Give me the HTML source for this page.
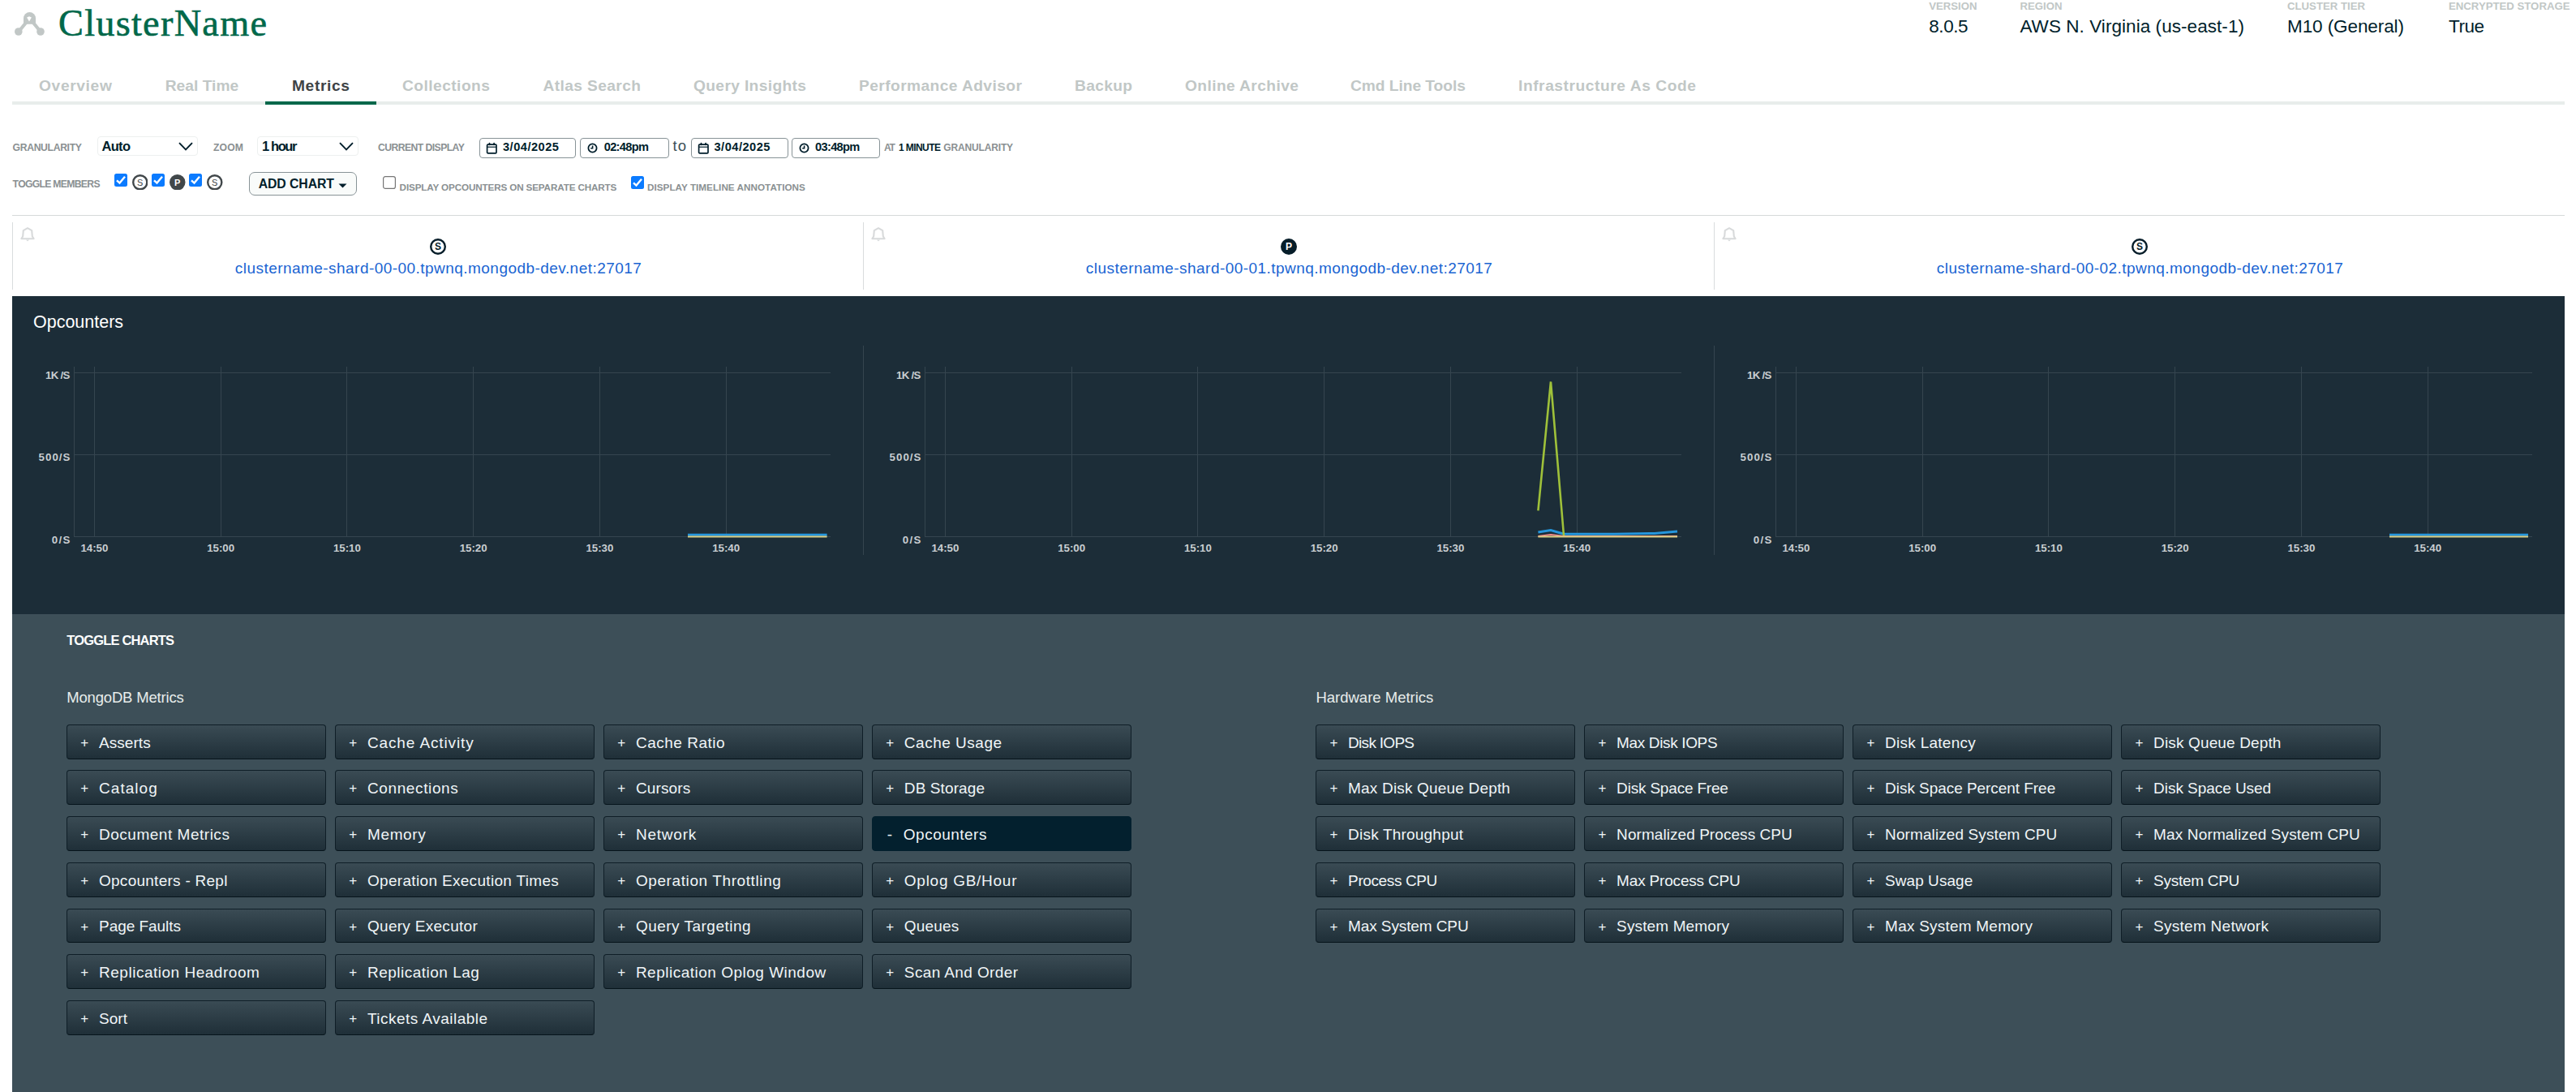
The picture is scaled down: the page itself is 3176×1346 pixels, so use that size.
<!DOCTYPE html>
<html><head><meta charset="utf-8"><style>
html,body{margin:0;padding:0;background:#fff;width:3176px;height:1346px;overflow:hidden;position:relative}
.t{position:absolute;white-space:nowrap;font-family:"Liberation Sans", sans-serif}
.b{position:absolute}
</style></head><body>
<svg class="b" style="left:16px;top:13px" width="42" height="34" viewBox="16 13 42 34">
<g fill="#c1c7c6" stroke="none">
<path d="M29 22.5 A7.5 7.5 0 0 1 44 22.5 L44 29.7 L29 29.7 Z"/>
<circle cx="22.8" cy="39" r="4.8"/><circle cx="50" cy="39" r="4.8"/>
</g>
<g stroke="#c1c7c6" stroke-width="4.2" fill="none" stroke-linecap="round">
<line x1="32" y1="28" x2="23" y2="39"/><line x1="41" y1="28" x2="50" y2="39"/>
</g>
<path d="M36 20.2 L38.9 21.6 L36 26.4 L33.1 21.6 Z" fill="#fff"/>
</svg>
<div class="t" style="left:72.00px;top:5.53px;font-size:46.3px;line-height:46.3px;color:#00684a;font-weight:400;font-family:'Liberation Serif', serif;letter-spacing:1.270px;-webkit-text-stroke:0.6px #00684a;">ClusterName</div>
<div class="t" style="left:2378.20px;top:0.62px;font-size:13.2px;line-height:13.2px;color:#c1c7c6;font-weight:700;">VERSION</div>
<div class="t" style="left:2378.20px;top:22.15px;font-size:22.5px;line-height:22.5px;color:#001e2b;font-weight:400;letter-spacing:-0.400px;">8.0.5</div>
<div class="t" style="left:2490.40px;top:0.62px;font-size:13.2px;line-height:13.2px;color:#c1c7c6;font-weight:700;">REGION</div>
<div class="t" style="left:2490.40px;top:22.15px;font-size:22.5px;line-height:22.5px;color:#001e2b;font-weight:400;letter-spacing:0.058px;">AWS N. Virginia (us-east-1)</div>
<div class="t" style="left:2820.00px;top:0.62px;font-size:13.2px;line-height:13.2px;color:#c1c7c6;font-weight:700;">CLUSTER TIER</div>
<div class="t" style="left:2820.00px;top:22.15px;font-size:22.5px;line-height:22.5px;color:#001e2b;font-weight:400;letter-spacing:-0.092px;">M10 (General)</div>
<div class="t" style="left:3019.00px;top:0.62px;font-size:13.2px;line-height:13.2px;color:#c1c7c6;font-weight:700;">ENCRYPTED STORAGE</div>
<div class="t" style="left:3019.00px;top:22.15px;font-size:22.5px;line-height:22.5px;color:#001e2b;font-weight:400;letter-spacing:-0.467px;">True</div>
<div class="b" style="left:15.00px;top:125.00px;width:3147.00px;height:3.70px;background:#e8edeb"></div>
<div class="t" style="left:48.00px;top:95.94px;font-size:19.2px;line-height:19.2px;color:#c1c7c6;font-weight:700;letter-spacing:0.643px;">Overview</div>
<div class="t" style="left:203.70px;top:95.94px;font-size:19.2px;line-height:19.2px;color:#c1c7c6;font-weight:700;letter-spacing:0.025px;">Real Time</div>
<div class="t" style="left:360.00px;top:95.94px;font-size:19.2px;line-height:19.2px;color:#3e4346;font-weight:700;letter-spacing:0.633px;">Metrics</div>
<div class="t" style="left:496.00px;top:95.94px;font-size:19.2px;line-height:19.2px;color:#c1c7c6;font-weight:700;letter-spacing:0.450px;">Collections</div>
<div class="t" style="left:669.60px;top:95.94px;font-size:19.2px;line-height:19.2px;color:#c1c7c6;font-weight:700;letter-spacing:0.373px;">Atlas Search</div>
<div class="t" style="left:855.00px;top:95.94px;font-size:19.2px;line-height:19.2px;color:#c1c7c6;font-weight:700;letter-spacing:0.354px;">Query Insights</div>
<div class="t" style="left:1059.00px;top:95.94px;font-size:19.2px;line-height:19.2px;color:#c1c7c6;font-weight:700;letter-spacing:0.417px;">Performance Advisor</div>
<div class="t" style="left:1325.00px;top:95.94px;font-size:19.2px;line-height:19.2px;color:#c1c7c6;font-weight:700;letter-spacing:0.320px;">Backup</div>
<div class="t" style="left:1461.00px;top:95.94px;font-size:19.2px;line-height:19.2px;color:#c1c7c6;font-weight:700;letter-spacing:0.400px;">Online Archive</div>
<div class="t" style="left:1665.00px;top:95.94px;font-size:19.2px;line-height:19.2px;color:#c1c7c6;font-weight:700;letter-spacing:-0.046px;">Cmd Line Tools</div>
<div class="t" style="left:1872.00px;top:95.94px;font-size:19.2px;line-height:19.2px;color:#c1c7c6;font-weight:700;letter-spacing:0.557px;">Infrastructure As Code</div>
<div class="b" style="left:327.00px;top:125.00px;width:137.00px;height:4.00px;background:#00684a"></div>
<div class="t" style="left:15.60px;top:175.97px;font-size:12.2px;line-height:12.2px;color:#8a9092;font-weight:700;letter-spacing:-0.340px;">GRANULARITY</div>
<div class="b" style="left:120.00px;top:168.00px;width:124.00px;height:23.60px;border:1px solid #edf0ef;border-radius:4px;box-sizing:border-box;background:#fff"></div>
<div class="t" style="left:125.40px;top:172.33px;font-size:16.5px;line-height:16.5px;color:#001e2b;font-weight:700;letter-spacing:-0.667px;">Auto</div>
<svg class="b" style="left:219.5px;top:175px" width="18" height="11" viewBox="0 0 18 11"><path d="M1 1.2 L9 9.3 L17 1.2" stroke="#001e2b" stroke-width="1.9" fill="none"/></svg>
<div class="t" style="left:263.00px;top:175.97px;font-size:12.2px;line-height:12.2px;color:#8a9092;font-weight:700;letter-spacing:0.133px;">ZOOM</div>
<div class="b" style="left:317.00px;top:168.00px;width:125.00px;height:23.60px;border:1px solid #edf0ef;border-radius:4px;box-sizing:border-box;background:#fff"></div>
<div class="t" style="left:323.00px;top:172.33px;font-size:16.5px;line-height:16.5px;color:#001e2b;font-weight:700;letter-spacing:-1.400px;">1 hour</div>
<svg class="b" style="left:417.5px;top:175px" width="18" height="11" viewBox="0 0 18 11"><path d="M1 1.2 L9 9.3 L17 1.2" stroke="#001e2b" stroke-width="1.9" fill="none"/></svg>
<div class="t" style="left:466.00px;top:175.97px;font-size:12.2px;line-height:12.2px;color:#8a9092;font-weight:700;letter-spacing:-0.557px;">CURRENT DISPLAY</div>
<div class="b" style="left:591.40px;top:170.00px;width:119.00px;height:25.00px;border:1px solid #889397;border-radius:4px;box-sizing:border-box;background:#fff"></div>
<svg class="b" style="left:599.4px;top:174.5px" width="15" height="15" viewBox="0 0 15 15"><rect x="1.6" y="3.2" width="11.4" height="10.6" rx="1" fill="none" stroke="#001e2b" stroke-width="1.7"/><line x1="1.6" y1="6.2" x2="13" y2="6.2" stroke="#001e2b" stroke-width="1.2"/><rect x="3.6" y="0.8" width="1.8" height="3.4" rx="0.9" fill="#001e2b"/><rect x="9.2" y="0.8" width="1.8" height="3.4" rx="0.9" fill="#001e2b"/></svg>
<div class="t" style="left:620.00px;top:173.84px;font-size:14.6px;line-height:14.6px;color:#001e2b;font-weight:700;letter-spacing:0.500px;">3/04/2025</div>
<div class="b" style="left:715.00px;top:170.00px;width:109.60px;height:25.00px;border:1px solid #889397;border-radius:4px;box-sizing:border-box;background:#fff"></div>
<svg class="b" style="left:724px;top:176px" width="13" height="13" viewBox="0 0 13 13"><circle cx="6.5" cy="6.5" r="5.1" fill="none" stroke="#001e2b" stroke-width="1.8"/><path d="M6.6 3.4 V6.8 H4.2" stroke="#001e2b" stroke-width="1.6" fill="none"/></svg>
<div class="t" style="left:744.70px;top:173.84px;font-size:14.6px;line-height:14.6px;color:#001e2b;font-weight:700;letter-spacing:-0.650px;">02:48pm</div>
<div class="t" style="left:829.50px;top:170.84px;font-size:18.5px;line-height:18.5px;color:#3d4f58;font-weight:400;letter-spacing:1.100px;">to</div>
<div class="b" style="left:852.00px;top:170.00px;width:119.60px;height:25.00px;border:1px solid #889397;border-radius:4px;box-sizing:border-box;background:#fff"></div>
<svg class="b" style="left:860px;top:174.5px" width="15" height="15" viewBox="0 0 15 15"><rect x="1.6" y="3.2" width="11.4" height="10.6" rx="1" fill="none" stroke="#001e2b" stroke-width="1.7"/><line x1="1.6" y1="6.2" x2="13" y2="6.2" stroke="#001e2b" stroke-width="1.2"/><rect x="3.6" y="0.8" width="1.8" height="3.4" rx="0.9" fill="#001e2b"/><rect x="9.2" y="0.8" width="1.8" height="3.4" rx="0.9" fill="#001e2b"/></svg>
<div class="t" style="left:880.50px;top:173.84px;font-size:14.6px;line-height:14.6px;color:#001e2b;font-weight:700;letter-spacing:0.500px;">3/04/2025</div>
<div class="b" style="left:976.00px;top:170.00px;width:108.60px;height:25.00px;border:1px solid #889397;border-radius:4px;box-sizing:border-box;background:#fff"></div>
<svg class="b" style="left:985px;top:176px" width="13" height="13" viewBox="0 0 13 13"><circle cx="6.5" cy="6.5" r="5.1" fill="none" stroke="#001e2b" stroke-width="1.8"/><path d="M6.6 3.4 V6.8 H4.2" stroke="#001e2b" stroke-width="1.6" fill="none"/></svg>
<div class="t" style="left:1005.00px;top:173.84px;font-size:14.6px;line-height:14.6px;color:#001e2b;font-weight:700;letter-spacing:-0.650px;">03:48pm</div>
<div class="t" style="left:1090.10px;top:175.64px;font-size:12px;line-height:12px;color:#8a9092;font-weight:700;letter-spacing:-1.400px;">AT</div>
<div class="t" style="left:1108.00px;top:175.64px;font-size:12px;line-height:12px;color:#001e2b;font-weight:700;letter-spacing:-0.586px;">1 MINUTE</div>
<div class="t" style="left:1163.30px;top:175.64px;font-size:12px;line-height:12px;color:#8a9092;font-weight:700;letter-spacing:-0.150px;">GRANULARITY</div>
<div class="t" style="left:15.60px;top:220.67px;font-size:12.2px;line-height:12.2px;color:#8a9092;font-weight:700;letter-spacing:-0.692px;">TOGGLE MEMBERS</div>
<svg class="b" style="left:141.1px;top:214px" width="16" height="16" viewBox="0 0 16 16"><rect width="16" height="16" rx="2.5" fill="#0b7bff"/><path d="M3 8.3 L6.5 11.6 L13 3.8" stroke="#fff" stroke-width="2.4" fill="none"/></svg>
<svg class="b" style="left:162.8px;top:214.9px" width="19.5" height="19.5" viewBox="0 0 19.5 19.5"><circle cx="9.75" cy="9.75" r="8.55" fill="#fff" stroke="#41474a" stroke-width="2.4"/><text x="9.75" y="13.71" text-anchor="middle" font-family="Liberation Sans" font-weight="400" font-size="11" fill="#41474a">S</text></svg>
<svg class="b" style="left:187.1px;top:214px" width="16" height="16" viewBox="0 0 16 16"><rect width="16" height="16" rx="2.5" fill="#0b7bff"/><path d="M3 8.3 L6.5 11.6 L13 3.8" stroke="#fff" stroke-width="2.4" fill="none"/></svg>
<svg class="b" style="left:209px;top:214.9px" width="19.5" height="19.5" viewBox="0 0 19.5 19.5"><circle cx="9.75" cy="9.75" r="9.75" fill="#41474a"/><text x="9.75" y="13.71" text-anchor="middle" font-family="Liberation Sans" font-weight="700" font-size="11" fill="#fff">P</text></svg>
<svg class="b" style="left:233.1px;top:214px" width="16" height="16" viewBox="0 0 16 16"><rect width="16" height="16" rx="2.5" fill="#0b7bff"/><path d="M3 8.3 L6.5 11.6 L13 3.8" stroke="#fff" stroke-width="2.4" fill="none"/></svg>
<svg class="b" style="left:255px;top:214.9px" width="19.5" height="19.5" viewBox="0 0 19.5 19.5"><circle cx="9.75" cy="9.75" r="8.55" fill="#fff" stroke="#41474a" stroke-width="2.4"/><text x="9.75" y="13.71" text-anchor="middle" font-family="Liberation Sans" font-weight="400" font-size="11" fill="#41474a">S</text></svg>
<div class="b" style="left:307.00px;top:212.00px;width:132.60px;height:28.70px;border:1px solid #889397;border-radius:7px;box-sizing:border-box;background:#f9fbfa"></div>
<div class="t" style="left:318.70px;top:218.62px;font-size:15.8px;line-height:15.8px;color:#001e2b;font-weight:700;letter-spacing:-0.075px;">ADD CHART</div>
<svg class="b" style="left:417px;top:226px" width="11" height="6" viewBox="0 0 11 6"><path d="M0.5 0.5 H10.5 L5.5 5.5 Z" fill="#001e2b"/></svg>
<svg class="b" style="left:472px;top:217px" width="16" height="16" viewBox="0 0 16 16"><rect x="0.6" y="0.6" width="14.8" height="14.8" rx="2.5" fill="#fff" stroke="#767676" stroke-width="1.2"/></svg>
<div class="t" style="left:492.60px;top:225.09px;font-size:11.7px;line-height:11.7px;color:#8a9092;font-weight:700;letter-spacing:-0.144px;">DISPLAY OPCOUNTERS ON SEPARATE CHARTS</div>
<svg class="b" style="left:778px;top:217px" width="16" height="16" viewBox="0 0 16 16"><rect width="16" height="16" rx="2.5" fill="#0b7bff"/><path d="M3 8.3 L6.5 11.6 L13 3.8" stroke="#fff" stroke-width="2.4" fill="none"/></svg>
<div class="t" style="left:798.00px;top:225.09px;font-size:11.7px;line-height:11.7px;color:#8a9092;font-weight:700;letter-spacing:0.033px;">DISPLAY TIMELINE ANNOTATIONS</div>
<div class="b" style="left:15.00px;top:265.00px;width:3147.00px;height:1.00px;background:#d6d9da"></div>
<div class="b" style="left:15.00px;top:274.00px;width:1.00px;height:83.00px;background:#d9dcdd"></div>
<svg class="b" style="left:25px;top:279px" width="18" height="19" viewBox="0 0 18 19"><path d="M9 2.2 L14.2 5.2 L14.8 12.2 L16.6 15.2 H1.4 L3.2 12.2 L3.8 5.2 Z" fill="none" stroke="#d8dadb" stroke-width="2.1" stroke-linejoin="round"/><path d="M6.9 16.4 L9 18.6 L11.1 16.4 Z" fill="#d8dadb"/></svg>
<svg class="b" style="left:529.5px;top:293.6px" width="20" height="20" viewBox="0 0 20 20"><circle cx="10" cy="10" r="8.8" fill="#fff" stroke="#061d29" stroke-width="2.4"/><text x="10" y="14.3" text-anchor="middle" font-family="Liberation Sans" font-weight="700" font-size="12" fill="#061d29">S</text></svg>
<div class="t" style="left:289.80px;top:320.71px;font-size:19px;line-height:19px;color:#1964d2;font-weight:400;letter-spacing:0.458px;">clustername-shard-00-00.tpwnq.mongodb-dev.net:27017</div>
<div class="b" style="left:1064.00px;top:274.00px;width:1.00px;height:83.00px;background:#d9dcdd"></div>
<svg class="b" style="left:1074px;top:279px" width="18" height="19" viewBox="0 0 18 19"><path d="M9 2.2 L14.2 5.2 L14.8 12.2 L16.6 15.2 H1.4 L3.2 12.2 L3.8 5.2 Z" fill="none" stroke="#d8dadb" stroke-width="2.1" stroke-linejoin="round"/><path d="M6.9 16.4 L9 18.6 L11.1 16.4 Z" fill="#d8dadb"/></svg>
<svg class="b" style="left:1578.5px;top:293.6px" width="20" height="20" viewBox="0 0 20 20"><circle cx="10" cy="10" r="10" fill="#061d29"/><text x="10" y="14.4" text-anchor="middle" font-family="Liberation Sans" font-weight="700" font-size="12" fill="#fff">P</text></svg>
<div class="t" style="left:1338.80px;top:320.71px;font-size:19px;line-height:19px;color:#1964d2;font-weight:400;letter-spacing:0.458px;">clustername-shard-00-01.tpwnq.mongodb-dev.net:27017</div>
<div class="b" style="left:2113.00px;top:274.00px;width:1.00px;height:83.00px;background:#d9dcdd"></div>
<svg class="b" style="left:2123px;top:279px" width="18" height="19" viewBox="0 0 18 19"><path d="M9 2.2 L14.2 5.2 L14.8 12.2 L16.6 15.2 H1.4 L3.2 12.2 L3.8 5.2 Z" fill="none" stroke="#d8dadb" stroke-width="2.1" stroke-linejoin="round"/><path d="M6.9 16.4 L9 18.6 L11.1 16.4 Z" fill="#d8dadb"/></svg>
<svg class="b" style="left:2627.5px;top:293.6px" width="20" height="20" viewBox="0 0 20 20"><circle cx="10" cy="10" r="8.8" fill="#fff" stroke="#061d29" stroke-width="2.4"/><text x="10" y="14.3" text-anchor="middle" font-family="Liberation Sans" font-weight="700" font-size="12" fill="#061d29">S</text></svg>
<div class="t" style="left:2387.80px;top:320.71px;font-size:19px;line-height:19px;color:#1964d2;font-weight:400;letter-spacing:0.458px;">clustername-shard-00-02.tpwnq.mongodb-dev.net:27017</div>
<div class="b" style="left:15.00px;top:365.00px;width:3147.00px;height:392.00px;background:#1c2d38"></div>
<div class="t" style="left:41.00px;top:386.80px;font-size:21.5px;line-height:21.5px;color:#ffffff;font-weight:400;letter-spacing:-0.011px;">Opcounters</div>
<div class="b" style="left:91.50px;top:459.10px;width:932.50px;height:1.00px;background:#35454f"></div>
<div class="b" style="left:91.50px;top:559.50px;width:932.50px;height:1.00px;background:#35454f"></div>
<div class="b" style="left:91.50px;top:660.90px;width:932.50px;height:1.00px;background:#35454f"></div>
<div class="b" style="left:91.00px;top:452.00px;width:1.00px;height:210.00px;background:#35454f"></div>
<div class="b" style="left:115.90px;top:452.00px;width:1.00px;height:210.00px;background:#35454f"></div>
<div class="t" style="left:99.40px;top:669.44px;font-size:13.3px;line-height:13.3px;color:#c9ced1;font-weight:700;">14:50</div>
<div class="b" style="left:271.65px;top:452.00px;width:1.00px;height:210.00px;background:#35454f"></div>
<div class="t" style="left:255.15px;top:669.44px;font-size:13.3px;line-height:13.3px;color:#c9ced1;font-weight:700;">15:00</div>
<div class="b" style="left:427.40px;top:452.00px;width:1.00px;height:210.00px;background:#35454f"></div>
<div class="t" style="left:410.90px;top:669.44px;font-size:13.3px;line-height:13.3px;color:#c9ced1;font-weight:700;">15:10</div>
<div class="b" style="left:583.15px;top:452.00px;width:1.00px;height:210.00px;background:#35454f"></div>
<div class="t" style="left:566.65px;top:669.44px;font-size:13.3px;line-height:13.3px;color:#c9ced1;font-weight:700;">15:20</div>
<div class="b" style="left:738.90px;top:452.00px;width:1.00px;height:210.00px;background:#35454f"></div>
<div class="t" style="left:722.40px;top:669.44px;font-size:13.3px;line-height:13.3px;color:#c9ced1;font-weight:700;">15:30</div>
<div class="b" style="left:894.65px;top:452.00px;width:1.00px;height:210.00px;background:#35454f"></div>
<div class="t" style="left:878.15px;top:669.44px;font-size:13.3px;line-height:13.3px;color:#c9ced1;font-weight:700;">15:40</div>
<div class="t" style="left:56.00px;top:456.14px;font-size:13.3px;line-height:13.3px;color:#c9ced1;font-weight:700;letter-spacing:-0.700px;">1K /S</div>
<div class="t" style="left:47.60px;top:556.74px;font-size:13.3px;line-height:13.3px;color:#c9ced1;font-weight:700;letter-spacing:1.025px;">500/S</div>
<div class="t" style="left:63.80px;top:658.54px;font-size:13.3px;line-height:13.3px;color:#c9ced1;font-weight:700;letter-spacing:1.350px;">0/S</div>
<div class="b" style="left:1140.50px;top:459.10px;width:932.50px;height:1.00px;background:#35454f"></div>
<div class="b" style="left:1140.50px;top:559.50px;width:932.50px;height:1.00px;background:#35454f"></div>
<div class="b" style="left:1140.50px;top:660.90px;width:932.50px;height:1.00px;background:#35454f"></div>
<div class="b" style="left:1140.00px;top:452.00px;width:1.00px;height:210.00px;background:#35454f"></div>
<div class="b" style="left:1164.90px;top:452.00px;width:1.00px;height:210.00px;background:#35454f"></div>
<div class="t" style="left:1148.40px;top:669.44px;font-size:13.3px;line-height:13.3px;color:#c9ced1;font-weight:700;">14:50</div>
<div class="b" style="left:1320.65px;top:452.00px;width:1.00px;height:210.00px;background:#35454f"></div>
<div class="t" style="left:1304.15px;top:669.44px;font-size:13.3px;line-height:13.3px;color:#c9ced1;font-weight:700;">15:00</div>
<div class="b" style="left:1476.40px;top:452.00px;width:1.00px;height:210.00px;background:#35454f"></div>
<div class="t" style="left:1459.90px;top:669.44px;font-size:13.3px;line-height:13.3px;color:#c9ced1;font-weight:700;">15:10</div>
<div class="b" style="left:1632.15px;top:452.00px;width:1.00px;height:210.00px;background:#35454f"></div>
<div class="t" style="left:1615.65px;top:669.44px;font-size:13.3px;line-height:13.3px;color:#c9ced1;font-weight:700;">15:20</div>
<div class="b" style="left:1787.90px;top:452.00px;width:1.00px;height:210.00px;background:#35454f"></div>
<div class="t" style="left:1771.40px;top:669.44px;font-size:13.3px;line-height:13.3px;color:#c9ced1;font-weight:700;">15:30</div>
<div class="b" style="left:1943.65px;top:452.00px;width:1.00px;height:210.00px;background:#35454f"></div>
<div class="t" style="left:1927.15px;top:669.44px;font-size:13.3px;line-height:13.3px;color:#c9ced1;font-weight:700;">15:40</div>
<div class="t" style="left:1105.00px;top:456.14px;font-size:13.3px;line-height:13.3px;color:#c9ced1;font-weight:700;letter-spacing:-0.700px;">1K /S</div>
<div class="t" style="left:1096.60px;top:556.74px;font-size:13.3px;line-height:13.3px;color:#c9ced1;font-weight:700;letter-spacing:1.025px;">500/S</div>
<div class="t" style="left:1112.80px;top:658.54px;font-size:13.3px;line-height:13.3px;color:#c9ced1;font-weight:700;letter-spacing:1.350px;">0/S</div>
<div class="b" style="left:1064.00px;top:426.00px;width:1.00px;height:258.00px;background:#35454f"></div>
<div class="b" style="left:2189.50px;top:459.10px;width:932.50px;height:1.00px;background:#35454f"></div>
<div class="b" style="left:2189.50px;top:559.50px;width:932.50px;height:1.00px;background:#35454f"></div>
<div class="b" style="left:2189.50px;top:660.90px;width:932.50px;height:1.00px;background:#35454f"></div>
<div class="b" style="left:2189.00px;top:452.00px;width:1.00px;height:210.00px;background:#35454f"></div>
<div class="b" style="left:2213.90px;top:452.00px;width:1.00px;height:210.00px;background:#35454f"></div>
<div class="t" style="left:2197.40px;top:669.44px;font-size:13.3px;line-height:13.3px;color:#c9ced1;font-weight:700;">14:50</div>
<div class="b" style="left:2369.65px;top:452.00px;width:1.00px;height:210.00px;background:#35454f"></div>
<div class="t" style="left:2353.15px;top:669.44px;font-size:13.3px;line-height:13.3px;color:#c9ced1;font-weight:700;">15:00</div>
<div class="b" style="left:2525.40px;top:452.00px;width:1.00px;height:210.00px;background:#35454f"></div>
<div class="t" style="left:2508.90px;top:669.44px;font-size:13.3px;line-height:13.3px;color:#c9ced1;font-weight:700;">15:10</div>
<div class="b" style="left:2681.15px;top:452.00px;width:1.00px;height:210.00px;background:#35454f"></div>
<div class="t" style="left:2664.65px;top:669.44px;font-size:13.3px;line-height:13.3px;color:#c9ced1;font-weight:700;">15:20</div>
<div class="b" style="left:2836.90px;top:452.00px;width:1.00px;height:210.00px;background:#35454f"></div>
<div class="t" style="left:2820.40px;top:669.44px;font-size:13.3px;line-height:13.3px;color:#c9ced1;font-weight:700;">15:30</div>
<div class="b" style="left:2992.65px;top:452.00px;width:1.00px;height:210.00px;background:#35454f"></div>
<div class="t" style="left:2976.15px;top:669.44px;font-size:13.3px;line-height:13.3px;color:#c9ced1;font-weight:700;">15:40</div>
<div class="t" style="left:2154.00px;top:456.14px;font-size:13.3px;line-height:13.3px;color:#c9ced1;font-weight:700;letter-spacing:-0.700px;">1K /S</div>
<div class="t" style="left:2145.60px;top:556.74px;font-size:13.3px;line-height:13.3px;color:#c9ced1;font-weight:700;letter-spacing:1.025px;">500/S</div>
<div class="t" style="left:2161.80px;top:658.54px;font-size:13.3px;line-height:13.3px;color:#c9ced1;font-weight:700;letter-spacing:1.350px;">0/S</div>
<div class="b" style="left:2113.00px;top:426.00px;width:1.00px;height:258.00px;background:#35454f"></div>
<svg class="b" style="left:0;top:0" width="3176" height="760" viewBox="0 0 3176 760"><path d="M848 659.2 L1019.6 659.2" stroke="#2596dc" stroke-width="3" fill="none"/><path d="M848 661.6 L1019.6 661.6" stroke="#d9cf85" stroke-width="2" fill="none"/><path d="M2946 659.2 L3117 659.2" stroke="#2596dc" stroke-width="3" fill="none"/><path d="M2946 661.6 L3117 661.6" stroke="#d9cf85" stroke-width="2" fill="none"/><path d="M1896.4 661 L1912 659 L1928 661 L2068 661" stroke="#f08a8a" stroke-width="2" fill="none"/><path d="M1896.4 661.4 L2068 661.4" stroke="#d9cf85" stroke-width="2" fill="none"/><path d="M1896.4 656 L1912 653.6 L1928 658.2 L1990 658.2 L2040 657.5 L2068 655" stroke="#2596dc" stroke-width="3" fill="none"/><path d="M1896.4 629.3 L1912 470.5 L1928 660" stroke="#9fc13a" stroke-width="2.6" fill="none"/></svg>
<div class="b" style="left:15.00px;top:757.00px;width:3147.00px;height:589.00px;background:#3d4f58"></div>
<div class="t" style="left:82.30px;top:781.33px;font-size:16.5px;line-height:16.5px;color:#ffffff;font-weight:700;letter-spacing:-0.833px;">TOGGLE CHARTS</div>
<div class="t" style="left:82.30px;top:851.04px;font-size:18.5px;line-height:18.5px;color:#e8edeb;font-weight:400;letter-spacing:-0.186px;">MongoDB Metrics</div>
<div class="t" style="left:1622.40px;top:851.34px;font-size:18.5px;line-height:18.5px;color:#e8edeb;font-weight:400;">Hardware Metrics</div>
<div class="b" style="left:82.30px;top:893.00px;width:319.50px;height:42.50px;border:1px solid #0f1e27;border-bottom-color:#06141b;border-radius:4px;box-sizing:border-box;background:linear-gradient(#3a4b54,#1f2f38);"></div>
<div class="t" style="left:99.30px;top:907.41px;font-size:17px;line-height:17px;color:#f0f5f7;font-weight:400;">+</div>
<div class="t" style="left:122.00px;top:905.71px;font-size:19px;line-height:19px;color:#f0f5f7;font-weight:400;letter-spacing:0.050px;">Asserts</div>
<div class="b" style="left:413.25px;top:893.00px;width:319.50px;height:42.50px;border:1px solid #0f1e27;border-bottom-color:#06141b;border-radius:4px;box-sizing:border-box;background:linear-gradient(#3a4b54,#1f2f38);"></div>
<div class="t" style="left:430.25px;top:907.41px;font-size:17px;line-height:17px;color:#f0f5f7;font-weight:400;">+</div>
<div class="t" style="left:452.95px;top:905.71px;font-size:19px;line-height:19px;color:#f0f5f7;font-weight:400;letter-spacing:0.881px;">Cache Activity</div>
<div class="b" style="left:744.20px;top:893.00px;width:319.50px;height:42.50px;border:1px solid #0f1e27;border-bottom-color:#06141b;border-radius:4px;box-sizing:border-box;background:linear-gradient(#3a4b54,#1f2f38);"></div>
<div class="t" style="left:761.20px;top:907.41px;font-size:17px;line-height:17px;color:#f0f5f7;font-weight:400;">+</div>
<div class="t" style="left:783.90px;top:905.71px;font-size:19px;line-height:19px;color:#f0f5f7;font-weight:400;letter-spacing:0.520px;">Cache Ratio</div>
<div class="b" style="left:1075.15px;top:893.00px;width:319.50px;height:42.50px;border:1px solid #0f1e27;border-bottom-color:#06141b;border-radius:4px;box-sizing:border-box;background:linear-gradient(#3a4b54,#1f2f38);"></div>
<div class="t" style="left:1092.15px;top:907.41px;font-size:17px;line-height:17px;color:#f0f5f7;font-weight:400;">+</div>
<div class="t" style="left:1114.85px;top:905.71px;font-size:19px;line-height:19px;color:#f0f5f7;font-weight:400;letter-spacing:0.505px;">Cache Usage</div>
<div class="b" style="left:82.30px;top:949.00px;width:319.50px;height:42.50px;border:1px solid #0f1e27;border-bottom-color:#06141b;border-radius:4px;box-sizing:border-box;background:linear-gradient(#3a4b54,#1f2f38);"></div>
<div class="t" style="left:99.30px;top:963.41px;font-size:17px;line-height:17px;color:#f0f5f7;font-weight:400;">+</div>
<div class="t" style="left:122.00px;top:961.71px;font-size:19px;line-height:19px;color:#f0f5f7;font-weight:400;letter-spacing:1.050px;">Catalog</div>
<div class="b" style="left:413.25px;top:949.00px;width:319.50px;height:42.50px;border:1px solid #0f1e27;border-bottom-color:#06141b;border-radius:4px;box-sizing:border-box;background:linear-gradient(#3a4b54,#1f2f38);"></div>
<div class="t" style="left:430.25px;top:963.41px;font-size:17px;line-height:17px;color:#f0f5f7;font-weight:400;">+</div>
<div class="t" style="left:452.95px;top:961.71px;font-size:19px;line-height:19px;color:#f0f5f7;font-weight:400;letter-spacing:0.625px;">Connections</div>
<div class="b" style="left:744.20px;top:949.00px;width:319.50px;height:42.50px;border:1px solid #0f1e27;border-bottom-color:#06141b;border-radius:4px;box-sizing:border-box;background:linear-gradient(#3a4b54,#1f2f38);"></div>
<div class="t" style="left:761.20px;top:963.41px;font-size:17px;line-height:17px;color:#f0f5f7;font-weight:400;">+</div>
<div class="t" style="left:783.90px;top:961.71px;font-size:19px;line-height:19px;color:#f0f5f7;font-weight:400;letter-spacing:0.133px;">Cursors</div>
<div class="b" style="left:1075.15px;top:949.00px;width:319.50px;height:42.50px;border:1px solid #0f1e27;border-bottom-color:#06141b;border-radius:4px;box-sizing:border-box;background:linear-gradient(#3a4b54,#1f2f38);"></div>
<div class="t" style="left:1092.15px;top:963.41px;font-size:17px;line-height:17px;color:#f0f5f7;font-weight:400;">+</div>
<div class="t" style="left:1114.85px;top:961.71px;font-size:19px;line-height:19px;color:#f0f5f7;font-weight:400;letter-spacing:0.106px;">DB Storage</div>
<div class="b" style="left:82.30px;top:1006.00px;width:319.50px;height:42.50px;border:1px solid #0f1e27;border-bottom-color:#06141b;border-radius:4px;box-sizing:border-box;background:linear-gradient(#3a4b54,#1f2f38);"></div>
<div class="t" style="left:99.30px;top:1020.41px;font-size:17px;line-height:17px;color:#f0f5f7;font-weight:400;">+</div>
<div class="t" style="left:122.00px;top:1018.71px;font-size:19px;line-height:19px;color:#f0f5f7;font-weight:400;letter-spacing:0.520px;">Document Metrics</div>
<div class="b" style="left:413.25px;top:1006.00px;width:319.50px;height:42.50px;border:1px solid #0f1e27;border-bottom-color:#06141b;border-radius:4px;box-sizing:border-box;background:linear-gradient(#3a4b54,#1f2f38);"></div>
<div class="t" style="left:430.25px;top:1020.41px;font-size:17px;line-height:17px;color:#f0f5f7;font-weight:400;">+</div>
<div class="t" style="left:452.95px;top:1018.71px;font-size:19px;line-height:19px;color:#f0f5f7;font-weight:400;letter-spacing:0.650px;">Memory</div>
<div class="b" style="left:744.20px;top:1006.00px;width:319.50px;height:42.50px;border:1px solid #0f1e27;border-bottom-color:#06141b;border-radius:4px;box-sizing:border-box;background:linear-gradient(#3a4b54,#1f2f38);"></div>
<div class="t" style="left:761.20px;top:1020.41px;font-size:17px;line-height:17px;color:#f0f5f7;font-weight:400;">+</div>
<div class="t" style="left:783.90px;top:1018.71px;font-size:19px;line-height:19px;color:#f0f5f7;font-weight:400;letter-spacing:0.783px;">Network</div>
<div class="b" style="left:1075.15px;top:1006.00px;width:319.50px;height:42.50px;border:1px solid #03202e;border-radius:4px;box-sizing:border-box;background:#03202e;"></div>
<div class="t" style="left:1093.65px;top:1018.71px;font-size:19px;line-height:19px;color:#f0f5f7;font-weight:400;">-</div>
<div class="t" style="left:1113.85px;top:1018.71px;font-size:19px;line-height:19px;color:#f0f5f7;font-weight:400;letter-spacing:0.483px;">Opcounters</div>
<div class="b" style="left:82.30px;top:1063.00px;width:319.50px;height:42.50px;border:1px solid #0f1e27;border-bottom-color:#06141b;border-radius:4px;box-sizing:border-box;background:linear-gradient(#3a4b54,#1f2f38);"></div>
<div class="t" style="left:99.30px;top:1077.41px;font-size:17px;line-height:17px;color:#f0f5f7;font-weight:400;">+</div>
<div class="t" style="left:122.00px;top:1075.71px;font-size:19px;line-height:19px;color:#f0f5f7;font-weight:400;letter-spacing:0.262px;">Opcounters - Repl</div>
<div class="b" style="left:413.25px;top:1063.00px;width:319.50px;height:42.50px;border:1px solid #0f1e27;border-bottom-color:#06141b;border-radius:4px;box-sizing:border-box;background:linear-gradient(#3a4b54,#1f2f38);"></div>
<div class="t" style="left:430.25px;top:1077.41px;font-size:17px;line-height:17px;color:#f0f5f7;font-weight:400;">+</div>
<div class="t" style="left:452.95px;top:1075.71px;font-size:19px;line-height:19px;color:#f0f5f7;font-weight:400;letter-spacing:0.323px;">Operation Execution Times</div>
<div class="b" style="left:744.20px;top:1063.00px;width:319.50px;height:42.50px;border:1px solid #0f1e27;border-bottom-color:#06141b;border-radius:4px;box-sizing:border-box;background:linear-gradient(#3a4b54,#1f2f38);"></div>
<div class="t" style="left:761.20px;top:1077.41px;font-size:17px;line-height:17px;color:#f0f5f7;font-weight:400;">+</div>
<div class="t" style="left:783.90px;top:1075.71px;font-size:19px;line-height:19px;color:#f0f5f7;font-weight:400;letter-spacing:0.600px;">Operation Throttling</div>
<div class="b" style="left:1075.15px;top:1063.00px;width:319.50px;height:42.50px;border:1px solid #0f1e27;border-bottom-color:#06141b;border-radius:4px;box-sizing:border-box;background:linear-gradient(#3a4b54,#1f2f38);"></div>
<div class="t" style="left:1092.15px;top:1077.41px;font-size:17px;line-height:17px;color:#f0f5f7;font-weight:400;">+</div>
<div class="t" style="left:1114.85px;top:1075.71px;font-size:19px;line-height:19px;color:#f0f5f7;font-weight:400;letter-spacing:0.729px;">Oplog GB/Hour</div>
<div class="b" style="left:82.30px;top:1119.50px;width:319.50px;height:42.50px;border:1px solid #0f1e27;border-bottom-color:#06141b;border-radius:4px;box-sizing:border-box;background:linear-gradient(#3a4b54,#1f2f38);"></div>
<div class="t" style="left:99.30px;top:1133.91px;font-size:17px;line-height:17px;color:#f0f5f7;font-weight:400;">+</div>
<div class="t" style="left:122.00px;top:1132.21px;font-size:19px;line-height:19px;color:#f0f5f7;font-weight:400;letter-spacing:-0.040px;">Page Faults</div>
<div class="b" style="left:413.25px;top:1119.50px;width:319.50px;height:42.50px;border:1px solid #0f1e27;border-bottom-color:#06141b;border-radius:4px;box-sizing:border-box;background:linear-gradient(#3a4b54,#1f2f38);"></div>
<div class="t" style="left:430.25px;top:1133.91px;font-size:17px;line-height:17px;color:#f0f5f7;font-weight:400;">+</div>
<div class="t" style="left:452.95px;top:1132.21px;font-size:19px;line-height:19px;color:#f0f5f7;font-weight:400;letter-spacing:0.296px;">Query Executor</div>
<div class="b" style="left:744.20px;top:1119.50px;width:319.50px;height:42.50px;border:1px solid #0f1e27;border-bottom-color:#06141b;border-radius:4px;box-sizing:border-box;background:linear-gradient(#3a4b54,#1f2f38);"></div>
<div class="t" style="left:761.20px;top:1133.91px;font-size:17px;line-height:17px;color:#f0f5f7;font-weight:400;">+</div>
<div class="t" style="left:783.90px;top:1132.21px;font-size:19px;line-height:19px;color:#f0f5f7;font-weight:400;letter-spacing:0.486px;">Query Targeting</div>
<div class="b" style="left:1075.15px;top:1119.50px;width:319.50px;height:42.50px;border:1px solid #0f1e27;border-bottom-color:#06141b;border-radius:4px;box-sizing:border-box;background:linear-gradient(#3a4b54,#1f2f38);"></div>
<div class="t" style="left:1092.15px;top:1133.91px;font-size:17px;line-height:17px;color:#f0f5f7;font-weight:400;">+</div>
<div class="t" style="left:1114.85px;top:1132.21px;font-size:19px;line-height:19px;color:#f0f5f7;font-weight:400;letter-spacing:0.170px;">Queues</div>
<div class="b" style="left:82.30px;top:1176.00px;width:319.50px;height:42.50px;border:1px solid #0f1e27;border-bottom-color:#06141b;border-radius:4px;box-sizing:border-box;background:linear-gradient(#3a4b54,#1f2f38);"></div>
<div class="t" style="left:99.30px;top:1190.41px;font-size:17px;line-height:17px;color:#f0f5f7;font-weight:400;">+</div>
<div class="t" style="left:122.00px;top:1188.71px;font-size:19px;line-height:19px;color:#f0f5f7;font-weight:400;letter-spacing:0.516px;">Replication Headroom</div>
<div class="b" style="left:413.25px;top:1176.00px;width:319.50px;height:42.50px;border:1px solid #0f1e27;border-bottom-color:#06141b;border-radius:4px;box-sizing:border-box;background:linear-gradient(#3a4b54,#1f2f38);"></div>
<div class="t" style="left:430.25px;top:1190.41px;font-size:17px;line-height:17px;color:#f0f5f7;font-weight:400;">+</div>
<div class="t" style="left:452.95px;top:1188.71px;font-size:19px;line-height:19px;color:#f0f5f7;font-weight:400;letter-spacing:0.496px;">Replication Lag</div>
<div class="b" style="left:744.20px;top:1176.00px;width:319.50px;height:42.50px;border:1px solid #0f1e27;border-bottom-color:#06141b;border-radius:4px;box-sizing:border-box;background:linear-gradient(#3a4b54,#1f2f38);"></div>
<div class="t" style="left:761.20px;top:1190.41px;font-size:17px;line-height:17px;color:#f0f5f7;font-weight:400;">+</div>
<div class="t" style="left:783.90px;top:1188.71px;font-size:19px;line-height:19px;color:#f0f5f7;font-weight:400;letter-spacing:0.500px;">Replication Oplog Window</div>
<div class="b" style="left:1075.15px;top:1176.00px;width:319.50px;height:42.50px;border:1px solid #0f1e27;border-bottom-color:#06141b;border-radius:4px;box-sizing:border-box;background:linear-gradient(#3a4b54,#1f2f38);"></div>
<div class="t" style="left:1092.15px;top:1190.41px;font-size:17px;line-height:17px;color:#f0f5f7;font-weight:400;">+</div>
<div class="t" style="left:1114.85px;top:1188.71px;font-size:19px;line-height:19px;color:#f0f5f7;font-weight:400;letter-spacing:0.381px;">Scan And Order</div>
<div class="b" style="left:82.30px;top:1233.00px;width:319.50px;height:42.50px;border:1px solid #0f1e27;border-bottom-color:#06141b;border-radius:4px;box-sizing:border-box;background:linear-gradient(#3a4b54,#1f2f38);"></div>
<div class="t" style="left:99.30px;top:1247.41px;font-size:17px;line-height:17px;color:#f0f5f7;font-weight:400;">+</div>
<div class="t" style="left:122.00px;top:1245.71px;font-size:19px;line-height:19px;color:#f0f5f7;font-weight:400;letter-spacing:0.033px;">Sort</div>
<div class="b" style="left:413.25px;top:1233.00px;width:319.50px;height:42.50px;border:1px solid #0f1e27;border-bottom-color:#06141b;border-radius:4px;box-sizing:border-box;background:linear-gradient(#3a4b54,#1f2f38);"></div>
<div class="t" style="left:430.25px;top:1247.41px;font-size:17px;line-height:17px;color:#f0f5f7;font-weight:400;">+</div>
<div class="t" style="left:452.95px;top:1245.71px;font-size:19px;line-height:19px;color:#f0f5f7;font-weight:400;letter-spacing:0.478px;">Tickets Available</div>
<div class="b" style="left:1622.40px;top:893.00px;width:319.50px;height:42.50px;border:1px solid #0f1e27;border-bottom-color:#06141b;border-radius:4px;box-sizing:border-box;background:linear-gradient(#3a4b54,#1f2f38);"></div>
<div class="t" style="left:1639.40px;top:907.41px;font-size:17px;line-height:17px;color:#f0f5f7;font-weight:400;">+</div>
<div class="t" style="left:1662.10px;top:905.71px;font-size:19px;line-height:19px;color:#f0f5f7;font-weight:400;letter-spacing:-0.713px;">Disk IOPS</div>
<div class="b" style="left:1953.40px;top:893.00px;width:319.50px;height:42.50px;border:1px solid #0f1e27;border-bottom-color:#06141b;border-radius:4px;box-sizing:border-box;background:linear-gradient(#3a4b54,#1f2f38);"></div>
<div class="t" style="left:1970.40px;top:907.41px;font-size:17px;line-height:17px;color:#f0f5f7;font-weight:400;">+</div>
<div class="t" style="left:1993.10px;top:905.71px;font-size:19px;line-height:19px;color:#f0f5f7;font-weight:400;letter-spacing:-0.358px;">Max Disk IOPS</div>
<div class="b" style="left:2284.40px;top:893.00px;width:319.50px;height:42.50px;border:1px solid #0f1e27;border-bottom-color:#06141b;border-radius:4px;box-sizing:border-box;background:linear-gradient(#3a4b54,#1f2f38);"></div>
<div class="t" style="left:2301.40px;top:907.41px;font-size:17px;line-height:17px;color:#f0f5f7;font-weight:400;">+</div>
<div class="t" style="left:2324.10px;top:905.71px;font-size:19px;line-height:19px;color:#f0f5f7;font-weight:400;letter-spacing:0.264px;">Disk Latency</div>
<div class="b" style="left:2615.40px;top:893.00px;width:319.50px;height:42.50px;border:1px solid #0f1e27;border-bottom-color:#06141b;border-radius:4px;box-sizing:border-box;background:linear-gradient(#3a4b54,#1f2f38);"></div>
<div class="t" style="left:2632.40px;top:907.41px;font-size:17px;line-height:17px;color:#f0f5f7;font-weight:400;">+</div>
<div class="t" style="left:2655.10px;top:905.71px;font-size:19px;line-height:19px;color:#f0f5f7;font-weight:400;letter-spacing:0.140px;">Disk Queue Depth</div>
<div class="b" style="left:1622.40px;top:949.00px;width:319.50px;height:42.50px;border:1px solid #0f1e27;border-bottom-color:#06141b;border-radius:4px;box-sizing:border-box;background:linear-gradient(#3a4b54,#1f2f38);"></div>
<div class="t" style="left:1639.40px;top:963.41px;font-size:17px;line-height:17px;color:#f0f5f7;font-weight:400;">+</div>
<div class="t" style="left:1662.10px;top:961.71px;font-size:19px;line-height:19px;color:#f0f5f7;font-weight:400;letter-spacing:0.179px;">Max Disk Queue Depth</div>
<div class="b" style="left:1953.40px;top:949.00px;width:319.50px;height:42.50px;border:1px solid #0f1e27;border-bottom-color:#06141b;border-radius:4px;box-sizing:border-box;background:linear-gradient(#3a4b54,#1f2f38);"></div>
<div class="t" style="left:1970.40px;top:963.41px;font-size:17px;line-height:17px;color:#f0f5f7;font-weight:400;">+</div>
<div class="t" style="left:1993.10px;top:961.71px;font-size:19px;line-height:19px;color:#f0f5f7;font-weight:400;letter-spacing:-0.186px;">Disk Space Free</div>
<div class="b" style="left:2284.40px;top:949.00px;width:319.50px;height:42.50px;border:1px solid #0f1e27;border-bottom-color:#06141b;border-radius:4px;box-sizing:border-box;background:linear-gradient(#3a4b54,#1f2f38);"></div>
<div class="t" style="left:2301.40px;top:963.41px;font-size:17px;line-height:17px;color:#f0f5f7;font-weight:400;">+</div>
<div class="t" style="left:2324.10px;top:961.71px;font-size:19px;line-height:19px;color:#f0f5f7;font-weight:400;letter-spacing:-0.050px;">Disk Space Percent Free</div>
<div class="b" style="left:2615.40px;top:949.00px;width:319.50px;height:42.50px;border:1px solid #0f1e27;border-bottom-color:#06141b;border-radius:4px;box-sizing:border-box;background:linear-gradient(#3a4b54,#1f2f38);"></div>
<div class="t" style="left:2632.40px;top:963.41px;font-size:17px;line-height:17px;color:#f0f5f7;font-weight:400;">+</div>
<div class="t" style="left:2655.10px;top:961.71px;font-size:19px;line-height:19px;color:#f0f5f7;font-weight:400;letter-spacing:-0.050px;">Disk Space Used</div>
<div class="b" style="left:1622.40px;top:1006.00px;width:319.50px;height:42.50px;border:1px solid #0f1e27;border-bottom-color:#06141b;border-radius:4px;box-sizing:border-box;background:linear-gradient(#3a4b54,#1f2f38);"></div>
<div class="t" style="left:1639.40px;top:1020.41px;font-size:17px;line-height:17px;color:#f0f5f7;font-weight:400;">+</div>
<div class="t" style="left:1662.10px;top:1018.71px;font-size:19px;line-height:19px;color:#f0f5f7;font-weight:400;letter-spacing:0.200px;">Disk Throughput</div>
<div class="b" style="left:1953.40px;top:1006.00px;width:319.50px;height:42.50px;border:1px solid #0f1e27;border-bottom-color:#06141b;border-radius:4px;box-sizing:border-box;background:linear-gradient(#3a4b54,#1f2f38);"></div>
<div class="t" style="left:1970.40px;top:1020.41px;font-size:17px;line-height:17px;color:#f0f5f7;font-weight:400;">+</div>
<div class="t" style="left:1993.10px;top:1018.71px;font-size:19px;line-height:19px;color:#f0f5f7;font-weight:400;letter-spacing:0.062px;">Normalized Process CPU</div>
<div class="b" style="left:2284.40px;top:1006.00px;width:319.50px;height:42.50px;border:1px solid #0f1e27;border-bottom-color:#06141b;border-radius:4px;box-sizing:border-box;background:linear-gradient(#3a4b54,#1f2f38);"></div>
<div class="t" style="left:2301.40px;top:1020.41px;font-size:17px;line-height:17px;color:#f0f5f7;font-weight:400;">+</div>
<div class="t" style="left:2324.10px;top:1018.71px;font-size:19px;line-height:19px;color:#f0f5f7;font-weight:400;letter-spacing:0.100px;">Normalized System CPU</div>
<div class="b" style="left:2615.40px;top:1006.00px;width:319.50px;height:42.50px;border:1px solid #0f1e27;border-bottom-color:#06141b;border-radius:4px;box-sizing:border-box;background:linear-gradient(#3a4b54,#1f2f38);"></div>
<div class="t" style="left:2632.40px;top:1020.41px;font-size:17px;line-height:17px;color:#f0f5f7;font-weight:400;">+</div>
<div class="t" style="left:2655.10px;top:1018.71px;font-size:19px;line-height:19px;color:#f0f5f7;font-weight:400;letter-spacing:0.142px;">Max Normalized System CPU</div>
<div class="b" style="left:1622.40px;top:1063.00px;width:319.50px;height:42.50px;border:1px solid #0f1e27;border-bottom-color:#06141b;border-radius:4px;box-sizing:border-box;background:linear-gradient(#3a4b54,#1f2f38);"></div>
<div class="t" style="left:1639.40px;top:1077.41px;font-size:17px;line-height:17px;color:#f0f5f7;font-weight:400;">+</div>
<div class="t" style="left:1662.10px;top:1075.71px;font-size:19px;line-height:19px;color:#f0f5f7;font-weight:400;letter-spacing:-0.390px;">Process CPU</div>
<div class="b" style="left:1953.40px;top:1063.00px;width:319.50px;height:42.50px;border:1px solid #0f1e27;border-bottom-color:#06141b;border-radius:4px;box-sizing:border-box;background:linear-gradient(#3a4b54,#1f2f38);"></div>
<div class="t" style="left:1970.40px;top:1077.41px;font-size:17px;line-height:17px;color:#f0f5f7;font-weight:400;">+</div>
<div class="t" style="left:1993.10px;top:1075.71px;font-size:19px;line-height:19px;color:#f0f5f7;font-weight:400;letter-spacing:-0.179px;">Max Process CPU</div>
<div class="b" style="left:2284.40px;top:1063.00px;width:319.50px;height:42.50px;border:1px solid #0f1e27;border-bottom-color:#06141b;border-radius:4px;box-sizing:border-box;background:linear-gradient(#3a4b54,#1f2f38);"></div>
<div class="t" style="left:2301.40px;top:1077.41px;font-size:17px;line-height:17px;color:#f0f5f7;font-weight:400;">+</div>
<div class="t" style="left:2324.10px;top:1075.71px;font-size:19px;line-height:19px;color:#f0f5f7;font-weight:400;letter-spacing:0.044px;">Swap Usage</div>
<div class="b" style="left:2615.40px;top:1063.00px;width:319.50px;height:42.50px;border:1px solid #0f1e27;border-bottom-color:#06141b;border-radius:4px;box-sizing:border-box;background:linear-gradient(#3a4b54,#1f2f38);"></div>
<div class="t" style="left:2632.40px;top:1077.41px;font-size:17px;line-height:17px;color:#f0f5f7;font-weight:400;">+</div>
<div class="t" style="left:2655.10px;top:1075.71px;font-size:19px;line-height:19px;color:#f0f5f7;font-weight:400;letter-spacing:-0.289px;">System CPU</div>
<div class="b" style="left:1622.40px;top:1119.50px;width:319.50px;height:42.50px;border:1px solid #0f1e27;border-bottom-color:#06141b;border-radius:4px;box-sizing:border-box;background:linear-gradient(#3a4b54,#1f2f38);"></div>
<div class="t" style="left:1639.40px;top:1133.91px;font-size:17px;line-height:17px;color:#f0f5f7;font-weight:400;">+</div>
<div class="t" style="left:1662.10px;top:1132.21px;font-size:19px;line-height:19px;color:#f0f5f7;font-weight:400;letter-spacing:-0.108px;">Max System CPU</div>
<div class="b" style="left:1953.40px;top:1119.50px;width:319.50px;height:42.50px;border:1px solid #0f1e27;border-bottom-color:#06141b;border-radius:4px;box-sizing:border-box;background:linear-gradient(#3a4b54,#1f2f38);"></div>
<div class="t" style="left:1970.40px;top:1133.91px;font-size:17px;line-height:17px;color:#f0f5f7;font-weight:400;">+</div>
<div class="t" style="left:1993.10px;top:1132.21px;font-size:19px;line-height:19px;color:#f0f5f7;font-weight:400;letter-spacing:0.133px;">System Memory</div>
<div class="b" style="left:2284.40px;top:1119.50px;width:319.50px;height:42.50px;border:1px solid #0f1e27;border-bottom-color:#06141b;border-radius:4px;box-sizing:border-box;background:linear-gradient(#3a4b54,#1f2f38);"></div>
<div class="t" style="left:2301.40px;top:1133.91px;font-size:17px;line-height:17px;color:#f0f5f7;font-weight:400;">+</div>
<div class="t" style="left:2324.10px;top:1132.21px;font-size:19px;line-height:19px;color:#f0f5f7;font-weight:400;letter-spacing:0.219px;">Max System Memory</div>
<div class="b" style="left:2615.40px;top:1119.50px;width:319.50px;height:42.50px;border:1px solid #0f1e27;border-bottom-color:#06141b;border-radius:4px;box-sizing:border-box;background:linear-gradient(#3a4b54,#1f2f38);"></div>
<div class="t" style="left:2632.40px;top:1133.91px;font-size:17px;line-height:17px;color:#f0f5f7;font-weight:400;">+</div>
<div class="t" style="left:2655.10px;top:1132.21px;font-size:19px;line-height:19px;color:#f0f5f7;font-weight:400;letter-spacing:0.269px;">System Network</div>
</body></html>
